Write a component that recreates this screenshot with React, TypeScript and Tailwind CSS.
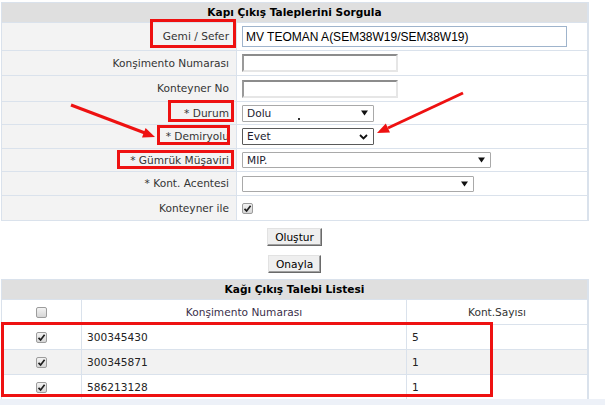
import React from 'react';

const lineCls = 'border-[#dae2ec]';

function Check({ checked = true }: { checked?: boolean }) {
  return (
    <div className="w-[11px] h-[11px] rounded-[2px] border border-[#9c9c9c] bg-gradient-to-b from-[#f3f3f3] to-[#d6d6d6] flex items-center justify-center">
      {checked && (
        <svg width="9" height="9" viewBox="0 0 9 9">
          <path d="M1.5 4.8 L3.6 6.9 L7.6 1.8" fill="none" stroke="#1e1e1e" strokeWidth="1.7" />
        </svg>
      )}
    </div>
  );
}

function Triangle() {
  return (
    <svg width="7" height="6" viewBox="0 0 7 6" className="shrink-0">
      <path d="M0 0.5 H7 L3.5 5.5 Z" fill="#111" />
    </svg>
  );
}

function Row({ label, h, children }: { label: string; h: string; children?: React.ReactNode }) {
  return (
    <div className={`flex border-b ${lineCls} ${h}`}>
      <div className={`w-[235px] shrink-0 bg-[#f3f3f3] border-r ${lineCls} flex items-center justify-end pr-[7px] text-[#333]`}>
        {label}
      </div>
      <div className="flex-1 flex items-center pl-[5px] bg-white">{children}</div>
    </div>
  );
}

function Select({ w, h, text, dark, chevron }: { w: string; h: string; text?: string; dark?: boolean; chevron?: boolean }) {
  return (
    <div
      className={`${w} ${h} border ${dark ? 'border-[#5a5a5a]' : 'border-[#a9a9a9]'} rounded-[1px] bg-white flex items-center justify-between pl-[4px] pr-[5px] text-[#1a1a2e]`}
    >
      <span>{text}</span>
      {chevron ? (
        <svg width="9" height="6" viewBox="0 0 9 6">
          <path d="M1 1 L4.5 4.5 L8 1" fill="none" stroke="#111" strokeWidth="1.8" />
        </svg>
      ) : (
        <Triangle />
      )}
    </div>
  );
}

function Inset() {
  return (
    <div className="w-[156px] h-[18px] border-2 border-t-[#8c8c8c] border-l-[#9a9a9a] border-b-[#e6e6e6] border-r-[#e6e6e6] bg-white" />
  );
}

function Button({ label }: { label: string }) {
  return (
    <div className="h-[18px] px-[7px] flex items-center bg-[#efefef] border border-t-[#e2e2e2] border-l-[#e2e2e2] border-r-[#6a6a6a] border-b-[#6a6a6a] shadow-[inset_-1px_-1px_0_#a0a0a0] text-black">
      {label}
    </div>
  );
}

const rows = [
  { no: '300345430', count: '5', bg: 'bg-white' },
  { no: '300345871', count: '1', bg: 'bg-[#f2f2f2]' },
  { no: '586213128', count: '1', bg: 'bg-white' },
];

export default function App() {
  return (
    <div className="relative w-[605px] h-[405px] overflow-hidden bg-white font-['DejaVu_Sans',Verdana,sans-serif] text-[10.6px] leading-none">
      {/* query form */}
      <div className={`ml-[1px] mt-[2px] w-[588px] border-t border-l border-r-2 ${lineCls}`}>
        <div className={`h-[20px] bg-[#dfdfdf] border-b ${lineCls} flex items-center justify-center font-bold text-black`}>
          Kapı Çıkış Taleplerini Sorgula
        </div>
        <Row label="Gemi / Sefer" h="h-[28px]">
          <div className="w-[325px] h-[21px] border border-[#9fb4cc] flex items-center pl-[3px] font-['Liberation_Sans',Arial,sans-serif] text-[12px] text-black">
            MV TEOMAN A(SEM38W19/SEM38W19)
          </div>
        </Row>
        <Row label="Konşimento Numarası" h="h-[25px]">
          <Inset />
        </Row>
        <Row label="Konteyner No" h="h-[26px]">
          <Inset />
        </Row>
        <Row label="* Durum" h="h-[23px]">
          <div className="relative">
            <Select w="w-[132px]" h="h-[17px]" text="Dolu" />
            <div className="absolute left-[56px] top-[13px] w-[2px] h-[2px] bg-[#333]" />
          </div>
        </Row>
        <Row label="* Demiryolu" h="h-[24px]">
          <Select w="w-[132px]" h="h-[17px]" text="Evet" dark chevron />
        </Row>
        <Row label="* Gümrük Müşaviri" h="h-[23px]">
          <Select w="w-[249px]" h="h-[16px]" text="MIP." />
        </Row>
        <Row label="* Kont. Acentesi" h="h-[24px]">
          <Select w="w-[232px]" h="h-[16px]" />
        </Row>
        <Row label="Konteyner ile" h="h-[25px]">
          <Check />
        </Row>
      </div>

      {/* actions */}
      <div className="w-[589px] flex flex-col items-center gap-[9px] pt-[7px] pb-[6px]">
        <Button label="Oluştur" />
        <Button label="Onayla" />
      </div>

      {/* list */}
      <div className={`ml-[1px] w-[588px] border-t border-l border-r-2 ${lineCls}`}>
        <div className={`h-[20px] bg-[#dfdfdf] border-b ${lineCls} flex items-center justify-center font-bold text-black`}>
          Kağı Çıkış Talebi Listesi
        </div>
        <div className={`h-[25px] flex border-b ${lineCls} text-[#3a2f4a]`}>
          <div className={`w-[80px] border-r ${lineCls} flex items-center justify-center`}>
            <Check checked={false} />
          </div>
          <div className={`w-[325px] border-r ${lineCls} flex items-center justify-center`}>Konşimento Numarası</div>
          <div className="flex-1 flex items-center justify-center text-[#333]">Kont.Sayısı</div>
        </div>
        {rows.map((r, i) => (
          <div key={r.no} className={`${i === 2 ? 'h-[24px]' : 'h-[25px] border-b'} flex ${lineCls} ${r.bg} text-[#222]`}>
            <div className={`w-[80px] border-r ${lineCls} flex items-center justify-center`}>
              <Check />
            </div>
            <div className={`w-[325px] border-r ${lineCls} flex items-center pl-[5px]`}>{r.no}</div>
            <div className="flex-1 flex items-center pl-[5px]">{r.count}</div>
          </div>
        ))}
      </div>
      <div className="w-[605px] h-[10px] bg-[#edf1f8]" />

      {/* red annotations */}
      <svg className="absolute left-0 top-0 pointer-events-none" width="605" height="405" viewBox="0 0 605 405">
        <g fill="none" stroke="#ee1111" strokeWidth="3">
          <rect x="151.5" y="20.5" width="83" height="26" />
          <rect x="169.5" y="101.5" width="63" height="19" />
          <rect x="158.5" y="126.5" width="70" height="17" />
          <rect x="118.5" y="151.5" width="114" height="16" />
          <rect x="2.5" y="323.5" width="489" height="72" />
          <line x1="71" y1="105" x2="145" y2="133" />
          <line x1="463" y1="93" x2="388" y2="128" />
        </g>
        <polygon points="155,137 142,137.4 145.6,128" fill="#ee1111" />
        <polygon points="377,133 385.8,123.4 390,132.4" fill="#ee1111" />
      </svg>
    </div>
  );
}
